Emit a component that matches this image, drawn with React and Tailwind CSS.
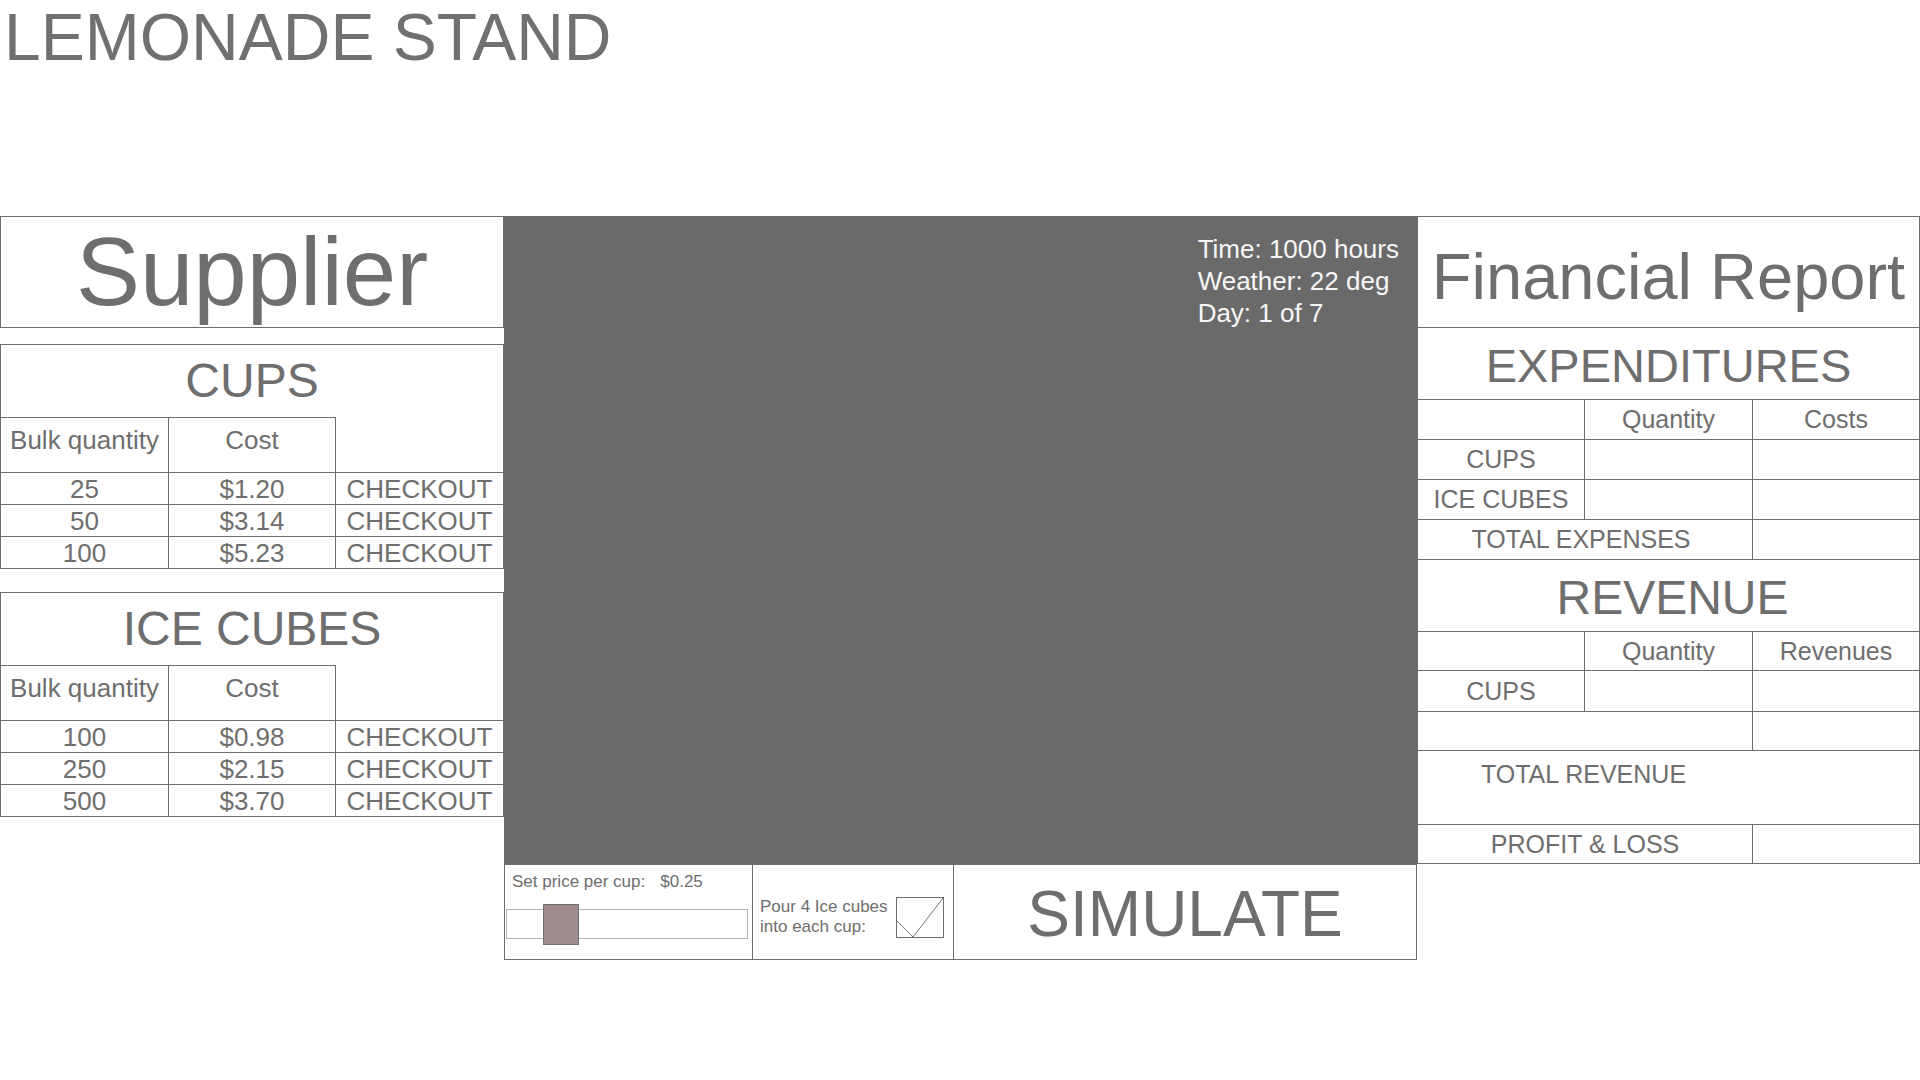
const cupRows = [
  ['25', '$1.20'],
  ['50', '$3.14'],
  ['100', '$5.23'],
];

const iceRows = [
  ['100', '$0.98'],
  ['250', '$2.15'],
  ['500', '$3.70'],
];

function SupplyTable({ title, rows }) {
  return (
    <div className="border border-[#6e6e6e]">
      <div className="h-[72px] flex items-center justify-center text-[48px] leading-none">{title}</div>
      <div className="grid grid-cols-[168px_167px_1fr] h-[55px] text-[26px] leading-none">
        <div className="border-t border-r border-[#6e6e6e] text-center pt-[9px] whitespace-nowrap">Bulk quantity</div>
        <div className="border-t border-r border-[#6e6e6e] text-center pt-[9px]">Cost</div>
        <div />
      </div>
      {rows.map(([qty, cost]) => (
        <div key={qty} className="grid grid-cols-[168px_167px_1fr] h-[32px] border-t border-[#6e6e6e] text-[26px] leading-none">
          <div className="border-r border-[#6e6e6e] flex items-center justify-center">{qty}</div>
          <div className="border-r border-[#6e6e6e] flex items-center justify-center">{cost}</div>
          <div className="flex items-center justify-center">CHECKOUT</div>
        </div>
      ))}
    </div>
  );
}

function Cell({ children, className = '' }) {
  return <div className={`flex items-center justify-center ${className}`}>{children}</div>;
}

export default function App() {
  return (
    <div className="w-[1920px] h-[1080px] bg-white text-[#6e6e6e] font-['Liberation_Sans',Arial,sans-serif] overflow-hidden">
      {/* Header */}
      <div className="h-[216px] pl-[4px]">
        <div className="text-[66px] leading-[74px] text-[#707070]">LEMONADE STAND</div>
      </div>

      <div className="flex items-start">
        {/* Supplier column */}
        <div className="w-[504px] flex flex-col">
          <div className="h-[112px] border border-[#6e6e6e] flex items-center justify-center text-[96px] leading-none">
            Supplier
          </div>
          <div className="mt-[16px]">
            <SupplyTable title="CUPS" rows={cupRows} />
          </div>
          <div className="mt-[23px]">
            <SupplyTable title="ICE CUBES" rows={iceRows} />
          </div>
        </div>

        {/* Stage */}
        <div className="w-[913px] flex flex-col">
          <div className="h-[648px] bg-[#6a6a6a] flex justify-end pt-[17px] pr-[18px]">
            <div className="text-[26px] leading-[32px] text-[#f7f7f7]">
              <div>Time: 1000 hours</div>
              <div>Weather: 22 deg</div>
              <div>Day: 1 of 7</div>
            </div>
          </div>
          <div className="flex h-[96px] border border-[#6e6e6e]">
            <div className="w-[248px] border-r border-[#6e6e6e]">
              <div className="pl-[7px] pt-[7px] text-[17px] leading-[19px] whitespace-nowrap">
                Set price per cup:<span className="ml-[15px]">$0.25</span>
              </div>
              <div className="relative ml-px mt-[18px] w-[242px] h-[30px] border border-[#b5b5b5] bg-white">
                <div className="absolute left-[36px] -top-[6px] w-[36px] h-[41px] bg-[#a08c8c] border border-[#707070]" />
              </div>
            </div>
            <div className="w-[201px] border-r border-[#6e6e6e] flex items-center pl-[7px] pr-[9px] pt-[10px]">
              <div className="text-[17px] leading-[20px] whitespace-nowrap">
                Pour 4 Ice cubes
                <br />
                into each cup:
              </div>
              <div className="ml-auto shrink-0 w-[48px] h-[41px] border border-[#6e6e6e]">
                <svg viewBox="0 0 46 39" className="w-full h-full">
                  <polyline points="0,23 16,39 46,0" fill="none" stroke="#555" strokeWidth="0.8" />
                </svg>
              </div>
            </div>
            <div className="flex-1 flex items-center justify-center pt-[4px] text-[64px] leading-none">SIMULATE</div>
          </div>
        </div>

        {/* Financial report */}
        <div className="w-[503px] border-l border-r border-t border-[#6e6e6e] flex flex-col text-[25px] leading-none">
          <div className="h-[111px] border-b border-[#6e6e6e] flex items-center justify-center pt-[8px] text-[65px]">
            Financial Report
          </div>
          <div className="h-[72px] border-b border-[#6e6e6e] flex items-center justify-center pt-[4px] text-[47px]">
            EXPENDITURES
          </div>
          <div className="h-[40px] border-b border-[#6e6e6e] grid grid-cols-[167px_168px_1fr]">
            <Cell className="border-r border-[#6e6e6e]" />
            <Cell className="border-r border-[#6e6e6e]">Quantity</Cell>
            <Cell>Costs</Cell>
          </div>
          <div className="h-[40px] border-b border-[#6e6e6e] grid grid-cols-[167px_168px_1fr]">
            <Cell className="border-r border-[#6e6e6e]">CUPS</Cell>
            <Cell className="border-r border-[#6e6e6e]" />
            <Cell />
          </div>
          <div className="h-[40px] border-b border-[#6e6e6e] grid grid-cols-[167px_168px_1fr]">
            <Cell className="border-r border-[#6e6e6e]">ICE CUBES</Cell>
            <Cell className="border-r border-[#6e6e6e]" />
            <Cell />
          </div>
          <div className="h-[40px] border-b border-[#6e6e6e] grid grid-cols-[335px_1fr]">
            <Cell className="border-r border-[#6e6e6e] pr-[8px]">TOTAL EXPENSES</Cell>
            <Cell />
          </div>
          <div className="h-[72px] border-b border-[#6e6e6e] flex items-center justify-center pt-[4px] pl-[8px] text-[48px]">
            REVENUE
          </div>
          <div className="h-[39px] border-b border-[#6e6e6e] grid grid-cols-[167px_168px_1fr]">
            <Cell className="border-r border-[#6e6e6e]" />
            <Cell className="border-r border-[#6e6e6e]">Quantity</Cell>
            <Cell>Revenues</Cell>
          </div>
          <div className="h-[41px] border-b border-[#6e6e6e] grid grid-cols-[167px_168px_1fr]">
            <Cell className="border-r border-[#6e6e6e]">CUPS</Cell>
            <Cell className="border-r border-[#6e6e6e]" />
            <Cell />
          </div>
          <div className="h-[39px] border-b border-[#6e6e6e] grid grid-cols-[335px_1fr]">
            <Cell className="border-r border-[#6e6e6e]" />
            <Cell />
          </div>
          <div className="h-[74px] border-b border-[#6e6e6e] grid grid-cols-[335px_1fr]">
            <div className="text-center pt-[11px] pr-[4px]">TOTAL REVENUE</div>
            <div />
          </div>
          <div className="h-[39px] border-b border-[#6e6e6e] grid grid-cols-[335px_1fr]">
            <Cell className="border-r border-[#6e6e6e]">PROFIT &amp; LOSS</Cell>
            <Cell />
          </div>
        </div>
      </div>
    </div>
  );
}
